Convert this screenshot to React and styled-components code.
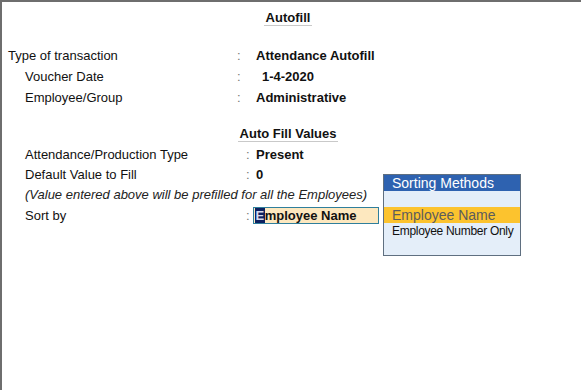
import React from "react";
import styled, { createGlobalStyle } from "styled-components";

const Global = createGlobalStyle`
  html, body {
    margin: 0;
    padding: 0;
    background: #fff;
  }
  body {
    font-family: "Liberation Sans", Arial, sans-serif;
    font-size: 13px;
    color: #111;
  }
`;

const Frame = styled.div`
  position: relative;
  box-sizing: border-box;
  width: 581px;
  height: 390px;
  border-top: 2px solid #6e6e6e;
  border-left: 2px solid #6e6e6e;
  padding: 9px 0 0 6px;
`;

const Heading = styled.div`
  display: flex;
  justify-content: center;
  padding-right: 13px;
  margin-top: ${(p) => p.$top || 0}px;
`;

const HeadingText = styled.span`
  display: inline-block;
  font-weight: bold;
  line-height: ${(p) => p.$lh || 14}px;
  padding: 0 2px;
  border-bottom: 1px solid #c9c9c9;
`;

const Section = styled.div`
  margin-top: ${(p) => p.$top}px;
`;

const Row = styled.div`
  display: grid;
  grid-template-columns: ${(p) => p.$colon - 8}px ${(p) => 256 - p.$colon}px 1fr;
  height: ${(p) => p.$h}px;
  align-items: center;
  white-space: nowrap;
`;

const Label = styled.div`
  padding-left: ${(p) => (p.$indent ? 17 : 0)}px;
`;

const Colon = styled.div`
  color: #777;
`;

const Value = styled.div`
  font-weight: bold;
  padding-left: ${(p) => p.$pad || 0}px;
`;

const Note = styled.div`
  font-style: italic;
  height: 20.5px;
  line-height: 20.5px;
  padding-left: 17px;
  color: #222;
`;

const SortBox = styled.div`
  box-sizing: border-box;
  width: 126px;
  height: 17px;
  margin-left: -3px;
  background: #fde8bf;
  border: 1px solid #2f7f9c;
  padding-left: 1px;
  font-weight: bold;
  line-height: 15px;
`;

const Cursor = styled.span`
  display: inline-block;
  background: #0d2160;
  color: #d6dcef;
  padding: 0 0.5px;
`;

const Popup = styled.div`
  position: absolute;
  left: 381px;
  top: 172px;
  box-sizing: border-box;
  width: 138px;
  height: 82px;
  background: #e4eef9;
  border: 1px solid #5f6f80;
  display: flex;
  flex-direction: column;
`;

const PopupTitle = styled.div`
  background: #2e62b0;
  color: #fff;
  font-size: 14px;
  line-height: 16px;
  height: 16px;
  padding-left: 8px;
`;

const Spacer = styled.div`
  height: 16px;
`;

const Option = styled.div`
  padding-left: 8px;
  white-space: nowrap;
  height: ${(p) => (p.$selected ? 16 : 17)}px;
  line-height: ${(p) => (p.$selected ? 16 : 17)}px;
  font-size: ${(p) => (p.$selected ? 14 : 12)}px;
  letter-spacing: ${(p) => (p.$selected ? 0 : -0.3)}px;
  background: ${(p) => (p.$selected ? "#fcc32e" : "transparent")};
  color: ${(p) => (p.$selected ? "#5c5c5c" : "#111")};
`;

const topRows = [
  { label: "Type of transaction", value: "Attendance Autofill" },
  { label: "Voucher Date", value: "1-4-2020", indent: true, pad: 6 },
  { label: "Employee/Group", value: "Administrative", indent: true },
];

const fillRows = [
  { label: "Attendance/Production Type", value: "Present" },
  { label: "Default Value to Fill", value: "0" },
];

export default function App() {
  return (
    <>
      <Global />
      <Frame>
        <Heading>
          <HeadingText>Autofill</HeadingText>
        </Heading>

        <Section $top={19}>
          {topRows.map((r) => (
            <Row key={r.label} $colon={237} $h={21}>
              <Label $indent={r.indent}>{r.label}</Label>
              <Colon>:</Colon>
              <Value $pad={r.pad}>{r.value}</Value>
            </Row>
          ))}
        </Section>

        <Heading $top={18}>
          <HeadingText $lh={15}>Auto Fill Values</HeadingText>
        </Heading>

        <Section $top={2}>
          {fillRows.map((r) => (
            <Row key={r.label} $colon={246} $h={20.5}>
              <Label $indent>{r.label}</Label>
              <Colon>:</Colon>
              <Value>{r.value}</Value>
            </Row>
          ))}
          <Note>(Value entered above will be prefilled for all the Employees)</Note>
          <Row $colon={246} $h={20.5}>
            <Label $indent>Sort by</Label>
            <Colon>:</Colon>
            <SortBox>
              <Cursor>E</Cursor>mployee Name
            </SortBox>
          </Row>
        </Section>

        <Popup>
          <PopupTitle>Sorting Methods</PopupTitle>
          <Spacer />
          <Option $selected>Employee Name</Option>
          <Option>Employee Number Only</Option>
        </Popup>
      </Frame>
    </>
  );
}
